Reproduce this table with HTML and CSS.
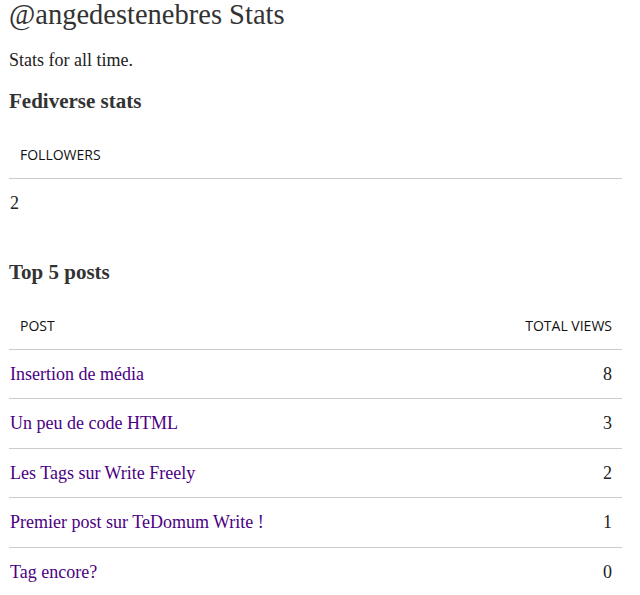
FILE: index.html
```html
<!DOCTYPE html>
<html lang="fr">
<head>
<meta charset="utf-8">
<title>@angedestenebres Stats</title>
<link rel="stylesheet" href="styles.css">
</head>
<body>
<div class="page">
  <h1 class="title">@angedestenebres Stats</h1>
  <p class="lead">Stats for all time.</p>
  <h3 class="section">Fediverse stats</h3>
  <table class="stats stats-fed">
    <thead>
      <tr><th>Followers</th></tr>
    </thead>
    <tbody>
      <tr><td>2</td></tr>
    </tbody>
  </table>
  <h3 class="section section-top">Top 5 posts</h3>
  <table class="stats stats-posts">
    <thead>
      <tr><th>Post</th><th class="num">Total Views</th></tr>
    </thead>
    <tbody>
      <tr><td><a href="#">Insertion de média</a></td><td class="num">8</td></tr>
      <tr><td><a href="#">Un peu de code HTML</a></td><td class="num">3</td></tr>
      <tr><td><a href="#">Les Tags sur Write Freely</a></td><td class="num">2</td></tr>
      <tr><td><a href="#">Premier post sur TeDomum Write !</a></td><td class="num">1</td></tr>
      <tr><td><a href="#">Tag encore?</a></td><td class="num">0</td></tr>
    </tbody>
  </table>
</div>
</body>
</html>
```

FILE: styles.css
```css
html, body {
  margin: 0;
  padding: 0;
  background: #fff;
}
body {
  font-family: "Liberation Serif", "Times New Roman", serif;
  color: #222;
}
.page {
  width: 613px;
  padding: 0 9px;
}
.title {
  margin: 0;
  font-size: 28.5px;
  font-weight: normal;
  line-height: 30px;
  color: #333;
}
.lead {
  margin: 19px 0 0;
  font-size: 18px;
  line-height: 22px;
}
.section {
  margin: 19px 0 0;
  font-size: 21px;
  font-weight: bold;
  line-height: 22px;
  color: #333;
}
.section-top {
  margin-top: 33px;
}
.stats {
  width: 100%;
  border-collapse: collapse;
  margin-top: 18px;
}
.stats th {
  font-family: "Open Sans", sans-serif;
  font-weight: normal;
  font-size: 14px;
  text-transform: uppercase;
  text-align: left;
  line-height: 20px;
  padding: 15px 10px 13px 11px;
  color: #111;
  border-bottom: 1px solid #ccc;
}
.stats td {
  font-size: 18px;
  line-height: 20.5px;
  padding: 14px 10px 14px 1px;
  border-bottom: 1px solid #ccc;
}
.stats tbody tr:last-child td {
  border-bottom: none;
}
.stats .num {
  text-align: right;
}
.stats a {
  color: #4b0082;
  text-decoration: none;
}
```
